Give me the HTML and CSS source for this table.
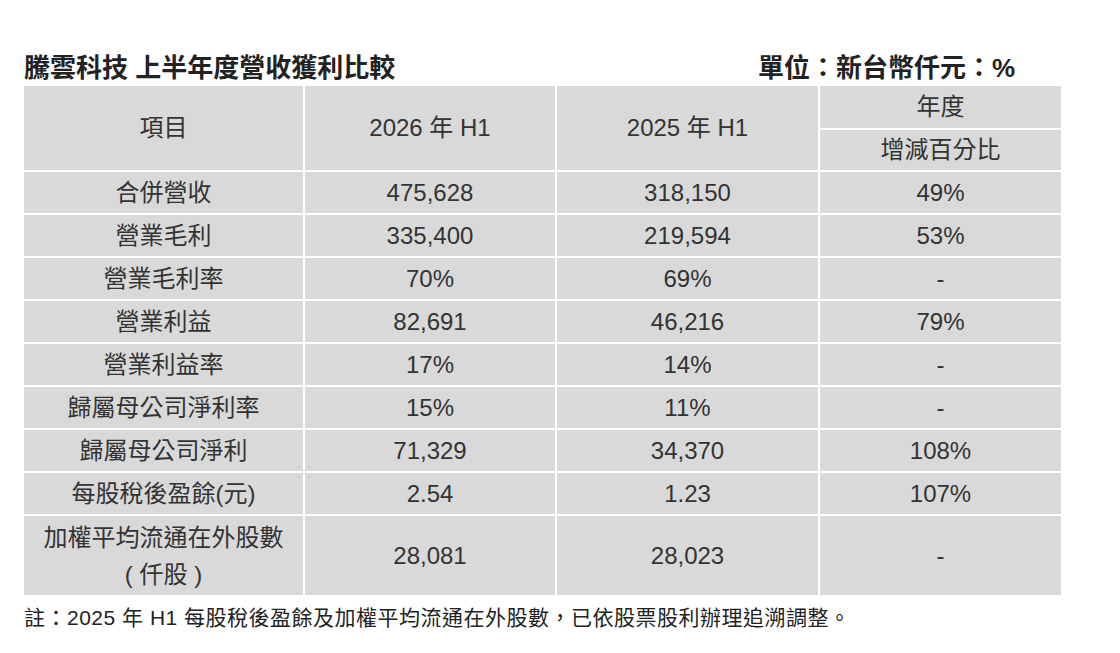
FILE: index.html
```html
<!DOCTYPE html>
<html lang="zh-Hant">
<head>
<meta charset="utf-8">
<title>騰雲科技 上半年度營收獲利比較</title>
<link rel="stylesheet" href="styles.css">
</head>
<body>
<div class="page">
  <div class="heading">
    <span class="title">騰雲科技 上半年度營收獲利比較</span>
    <span class="unit">單位：新台幣仟元：%</span>
  </div>
  <table class="report">
    <colgroup>
      <col class="c1"><col class="c2"><col class="c3"><col class="c4">
    </colgroup>
    <thead>
      <tr class="h1">
        <th rowspan="2">項目</th>
        <th rowspan="2">2026 年 H1</th>
        <th rowspan="2">2025 年 H1</th>
        <th>年度</th>
      </tr>
      <tr class="h2">
        <th>增減百分比</th>
      </tr>
    </thead>
    <tbody>
      <tr><td>合併營收</td><td>475,628</td><td>318,150</td><td>49%</td></tr>
      <tr><td>營業毛利</td><td>335,400</td><td>219,594</td><td>53%</td></tr>
      <tr><td>營業毛利率</td><td>70%</td><td>69%</td><td>-</td></tr>
      <tr><td>營業利益</td><td>82,691</td><td>46,216</td><td>79%</td></tr>
      <tr><td>營業利益率</td><td>17%</td><td>14%</td><td>-</td></tr>
      <tr><td>歸屬母公司淨利率</td><td>15%</td><td>11%</td><td>-</td></tr>
      <tr><td>歸屬母公司淨利</td><td>71,329</td><td>34,370</td><td>108%</td></tr>
      <tr><td>每股稅後盈餘(元)</td><td>2.54</td><td>1.23</td><td>107%</td></tr>
      <tr class="tall"><td><span class="two">加權平均流通在外股數<br>( 仟股 )</span></td><td>28,081</td><td>28,023</td><td>-</td></tr>
    </tbody>
  </table>
  <p class="note">註：2025 年 H1 每股稅後盈餘及加權平均流通在外股數，已依股票股利辦理追溯調整。</p>
</div>
</body>
</html>
```
FILE: styles.css
```css
html, body {
  margin: 0;
  padding: 0;
  background: #ffffff;
}

body {
  font-family: "Liberation Sans", "Noto Sans CJK TC", sans-serif;
  color: #333333;
}

.page {
  padding: 55px 0 0 22px;
  width: 1041px;
}

.heading {
  display: flex;
  justify-content: space-between;
  align-items: baseline;
  padding: 0 48px 0 2px;
  font-size: 26px;
  line-height: 26px;
  font-weight: bold;
  color: #222222;
  margin-bottom: 3px;
}

.report {
  border-collapse: separate;
  border-spacing: 2px;
  table-layout: fixed;
  width: 1041px;
  font-size: 24px;
  color: #333333;
}

.c1 { width: 279px; }
.c2 { width: 250px; }
.c3 { width: 261px; }
.c4 { width: 241px; }

.report th,
.report td {
  background: #d9d9d9;
  text-align: center;
  vertical-align: middle;
  font-weight: normal;
  padding: 0;
  line-height: 28px;
}

.report .h1 th { height: 42px; }
.report .h2 th { height: 40px; }
.report tbody tr td { height: 41px; }
.report tbody tr.tall td { height: 79px; }

.two {
  display: block;
  line-height: 37px;
}

.note {
  margin: 9px 0 0 2px;
  font-size: 21px;
  line-height: 24px;
  letter-spacing: 0.5px;
  color: #222222;
}
```
